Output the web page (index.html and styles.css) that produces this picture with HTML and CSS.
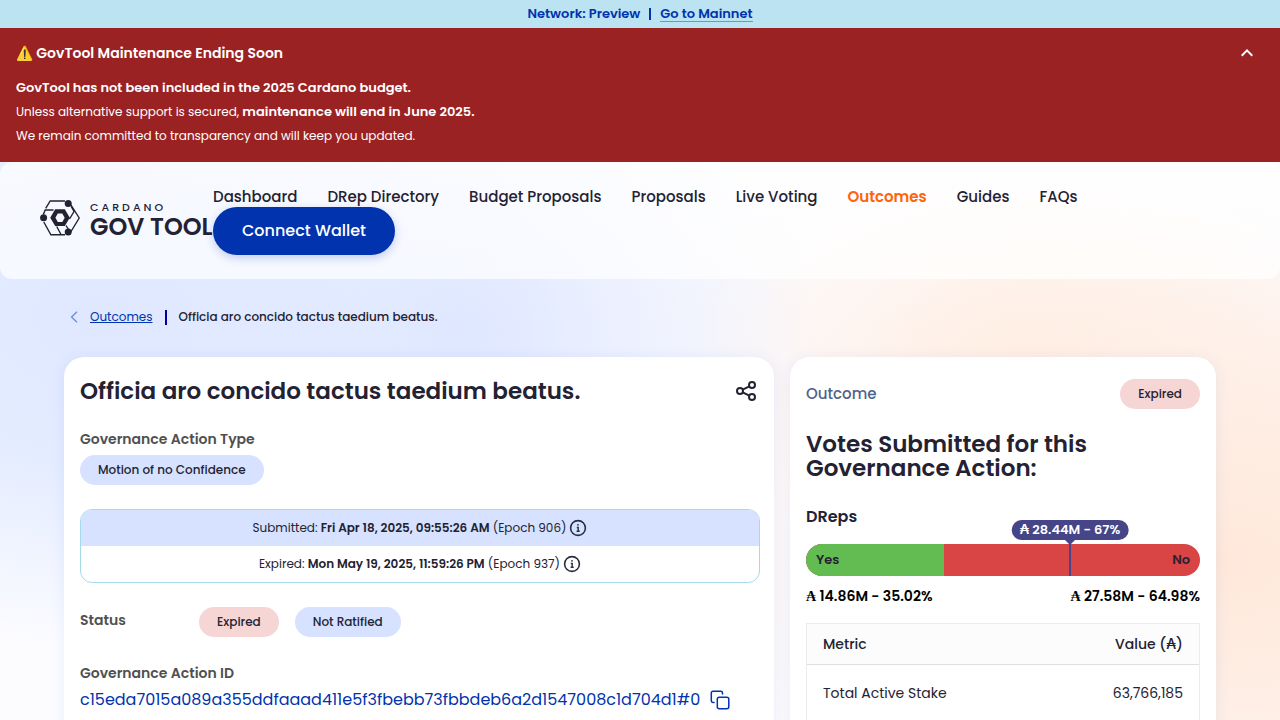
FILE: index.html
```html
<!DOCTYPE html>
<html lang="en">
<head>
<meta charset="utf-8">
<meta name="viewport" content="width=device-width, initial-scale=1">
<title>Outcomes - Cardano GovTool</title>
<link rel="stylesheet" href="styles.css">
</head>
<body>
<div class="network-bar">
  <span class="network-name">Network: Preview</span>
  <span class="network-divider"></span>
  <a class="network-link" href="#mainnet">Go to Mainnet</a>
</div>

<section class="notice">
  <div class="notice-head">
    <h2 class="notice-title"><span class="notice-emoji">⚠️</span> GovTool Maintenance Ending Soon</h2>
    <button class="icon-button" type="button" aria-label="Collapse notice">
      <svg width="24" height="24" viewBox="0 0 24 24" fill="#fff"><path d="m12 8-6 6 1.410 1.410L12 10.830l4.590 4.580L18 14z"/></svg>
    </button>
  </div>
  <p class="notice-text"><strong>GovTool has not been included in the 2025 Cardano budget.</strong></p>
  <p class="notice-text">Unless alternative support is secured, <strong>maintenance will end in June 2025.</strong></p>
  <p class="notice-text">We remain committed to transparency and will keep you updated.</p>
</section>

<header class="header">
  <a class="logo" href="#home">
    <svg class="logo-mark" width="40" height="36" viewBox="0 0 40 36" fill="none" stroke="#242232" stroke-width="1.400">
      <path d="M5.700 8.300 10.200 1H25M3.300 14.500 5.200 10H13.500M30.700 4.500 39.200 18 30.700 32M25 34.800H10.900L3.800 22M31.200 6.500 34 11.500 29.500 19M16.700 26.500 21 34.500M26 25.500 28.500 29.500"/>
      <path d="M15.200 9.300h9.600l5 8.400-5 8.400h-9.600l-5-8.400z" fill="#242232" stroke="none"/>
      <path d="M17.800 13.500h4.500l2.400 4.200-2.400 4.200h-4.500l-2.400-4.200z" fill="#f5f8ff" stroke="none"/>
      <g fill="#242232" stroke="none"><circle cx="28.200" cy="3.600" r="3.500"/><circle cx="3.600" cy="17.700" r="3.500"/><circle cx="28.200" cy="32" r="3.500"/></g>
    </svg>
    <span class="logo-text"><span class="logo-small">CARDANO</span><span class="logo-big">GOV TOOL</span></span>
  </a>
  <div class="header-main">
    <nav class="nav">
      <a href="#dashboard">Dashboard</a>
      <a href="#dreps">DRep Directory</a>
      <a href="#budget">Budget Proposals</a>
      <a href="#proposals">Proposals</a>
      <a href="#voting">Live Voting</a>
      <a class="active" href="#outcomes">Outcomes</a>
      <a href="#guides">Guides</a>
      <a href="#faqs">FAQs</a>
    </nav>
    <button class="connect" type="button">Connect Wallet</button>
  </div>
</header>

<main class="page">
  <div class="crumbs">
    <svg width="8" height="12" viewBox="0 0 8 12" fill="none" stroke="#6a8ed6" stroke-width="1.300"><path d="M7 .7 1.500 6 7 11.300"/></svg>
    <a class="crumb-link" href="#outcomes">Outcomes</a>
    <span class="crumb-divider"></span>
    <span class="crumb-current">Officia aro concido tactus taedium beatus.</span>
  </div>

  <div class="columns">
    <article class="card">
      <div class="title-row">
        <h1 class="heading">Officia aro concido tactus taedium beatus.</h1>
        <button class="icon-button" type="button" aria-label="Share">
          <svg width="24" height="24" viewBox="0 0 24 24" fill="none" stroke="#242232" stroke-width="2"><circle cx="18" cy="6" r="3"/><circle cx="6" cy="12" r="3"/><circle cx="18" cy="18" r="3"/><path d="m8.700 10.700 6.600-3.400M8.700 13.300l6.600 3.400"/></svg>
        </button>
      </div>

      <section class="field field-type">
        <h3 class="label">Governance Action Type</h3>
        <span class="chip">Motion of no Confidence</span>
      </section>

      <div class="dates">
        <div class="date date-submitted">
          <span>Submitted: <strong>Fri Apr 18, 2025, 09:55:26 AM</strong> (Epoch 906)</span>
          <svg width="18" height="18" viewBox="0 0 18 18" fill="none" stroke="#2a2e42" stroke-width="1.600"><circle cx="9" cy="9" r="7.400"/><path d="M7.800 8.500H9.200V12.200M7.600 12.300H10.700" stroke-width="1.400"/><circle cx="9" cy="5.800" r=".9" fill="#2a2e42" stroke="none"/></svg>
        </div>
        <div class="date">
          <span>Expired: <strong>Mon May 19, 2025, 11:59:26 PM</strong> (Epoch 937)</span>
          <svg width="18" height="18" viewBox="0 0 18 18" fill="none" stroke="#2a2e42" stroke-width="1.600"><circle cx="9" cy="9" r="7.400"/><path d="M7.800 8.500H9.200V12.200M7.600 12.300H10.700" stroke-width="1.400"/><circle cx="9" cy="5.800" r=".9" fill="#2a2e42" stroke="none"/></svg>
        </div>
      </div>

      <section class="status">
        <h3 class="label">Status</h3>
        <div class="chips"><span class="chip chip-expired">Expired</span><span class="chip">Not Ratified</span></div>
      </section>

      <section class="field">
        <h3 class="label">Governance Action ID</h3>
        <div class="id-row">
          <span class="id">c15eda7015a089a355ddfaaad411e5f3fbebb73fbbdeb6a2d1547008c1d704d1#0</span>
          <button class="icon-button" type="button" aria-label="Copy ID">
            <svg width="20" height="20" viewBox="0 0 20 20" fill="none" stroke="#0033ad" stroke-width="1.500" stroke-linecap="round"><rect x="7.300" y="7.300" width="11.500" height="11.500" rx="2"/><path d="M4 12.500H3A1.700 1.700 0 0 1 1.300 10.800V3A1.700 1.700 0 0 1 3 1.300h7.800A1.700 1.700 0 0 1 12.500 3v1"/></svg>
          </button>
        </div>
      </section>
    </article>

    <aside class="card">
      <div class="outcome-row">
        <span class="outcome">Outcome</span>
        <span class="chip chip-expired">Expired</span>
      </div>
      <h2 class="heading votes-heading">Votes Submitted for this Governance Action:</h2>

      <h3 class="group">DReps</h3>
      <div class="bar">
        <div class="bar-fill">
          <div class="bar-yes" style="width:35.02%">Yes</div>
          <div class="bar-no">No</div>
        </div>
        <div class="threshold" style="left:67%"><span class="bubble">₳ 28.44M - 67%</span></div>
      </div>
      <div class="totals"><span><span class="ada">₳</span> 14.86M - 35.02%</span><span><span class="ada">₳</span> 27.58M - 64.98%</span></div>

      <table class="metrics">
        <thead><tr><th>Metric</th><th>Value (₳)</th></tr></thead>
        <tbody><tr><td>Total Active Stake</td><td>63,766,185</td></tr></tbody>
      </table>
    </aside>
  </div>
</main>
</body>
</html>
```
FILE: styles.css
```css
* { box-sizing: border-box; }

body {
  margin: 0;
  min-height: 100vh;
  font-family: Poppins, Inter, "Open Sans", sans-serif;
  font-size: 12px;
  line-height: 24px;
  color: #242232;
  background:
    radial-gradient(ellipse 36% 46% at 8% 44%, #dfe8ff 0%, rgba(222, 232, 255, 0.800) 45%, rgba(225, 233, 255, 0) 100%),
    radial-gradient(ellipse 28% 40% at 36% 46%, #dfe7ff 0%, rgba(230, 236, 255, 0) 100%),
    radial-gradient(ellipse 42% 50% at 96% 78%, #ffe8da 0%, rgba(255, 235, 223, 0.800) 40%, rgba(255, 240, 232, 0) 100%),
    radial-gradient(ellipse 30% 30% at 80% 48%, #fff0e6 0%, rgba(255, 242, 234, 0) 100%),
    #fcfcff;
  background-attachment: fixed;
}

h1, h2, h3, p { margin: 0; }
a { color: inherit; text-decoration: none; }
button { font: inherit; border: 0; cursor: pointer; }
strong { font-weight: 600; }
svg { display: block; flex: none; }
.icon-button { display: block; padding: 0; background: none; }

.network-bar {
  display: flex;
  justify-content: center;
  align-items: center;
  gap: 9px;
  height: 28px;
  background: #bbe3f1;
  color: #0033ad;
  font-size: 13px;
  font-weight: 600;
}
.network-divider { width: 2px; height: 12px; background: #0033ad; }
.network-link { border-bottom: 1px solid #6f94d3; line-height: 14px; }

.notice { padding: 13px 16px 14px; background: #9b2223; color: #fff; }
.notice-head {
  display: flex;
  justify-content: space-between;
  align-items: center;
  padding-right: 5px;
  margin-bottom: 11px;
}
.notice-title { font-size: 14px; font-weight: 600; line-height: 24px; }
.notice-text { line-height: 24px; }
.notice-text strong { font-size: 13px; }

.header {
  display: flex;
  align-items: center;
  padding: 24px 40px;
  border-radius: 12px;
  background: rgba(255, 255, 255, 0.700);
}
.logo { display: flex; align-items: flex-start; gap: 10px; flex: none; width: 173px; padding-bottom: 2px; }
.logo-text { display: flex; flex-direction: column; white-space: nowrap; }
.logo-small { font-size: 11px; font-weight: 500; line-height: 14px; letter-spacing: 3px; }
.logo-big { font-size: 24px; font-weight: 600; line-height: 26px; }
.header-main { flex: 1; }
.nav { display: flex; flex-wrap: wrap; gap: 0 30px; font-size: 15px; font-weight: 500; line-height: 21px; }
.nav .active { color: #ff640a; font-weight: 600; }
.connect {
  display: block;
  padding: 12px 29px;
  border-radius: 24px;
  background: #0033ad;
  color: #fff;
  font-size: 16px;
  font-weight: 500;
  line-height: 24px;
  box-shadow: 0 3px 10px rgba(0, 51, 173, 0.220);
}

.page { padding: 26px 64px 40px; }
.crumbs { display: flex; align-items: center; gap: 12px; padding-left: 6px; margin-bottom: 28px; }
.crumb-link { color: #0033ad; text-decoration: underline; }
.crumb-divider { width: 2px; height: 15px; background: #0000a0; }
.crumb-current { font-weight: 500; }

.columns { display: grid; grid-template-columns: 5fr 3fr; gap: 16px; }
.card {
  min-width: 0;
  padding: 22px 16px 64px;
  border-radius: 20px;
  background: #fff;
  box-shadow: 0 2px 15px rgba(47, 98, 220, 0.090);
}
.card:first-child { padding-right: 14px; }
.heading { font-size: 23px; font-weight: 600; line-height: 24px; }

.title-row { display: flex; justify-content: space-between; align-items: center; margin-bottom: 24px; padding-right: 2px; }
.field-type { margin-bottom: 24px; }
.label { font-size: 14px; font-weight: 600; line-height: 24px; color: #505050; }
.field-type .label { margin-bottom: 4px; }

.chip {
  display: inline-block;
  padding: 5px 18px;
  border-radius: 15px;
  background: #d6e2ff;
  font-size: 12px;
  font-weight: 500;
  line-height: 20px;
  vertical-align: top;
}
.chip-expired { background: #f6d5d5; }

.dates { margin-bottom: 24px; border: 1px solid #a5dbe8; border-radius: 12px; overflow: hidden; }
.date { display: flex; justify-content: center; align-items: center; gap: 3px; height: 36px; }
.date-submitted { background: #d6e2ff; }
.status { display: flex; align-items: flex-start; margin-bottom: 24px; }
.status .label { width: 119px; }
.chips { display: flex; gap: 16px; }
.status .label { line-height: 26px; }
.id-row { display: flex; align-items: center; gap: 10px; padding-top: 3px; }
.id { min-width: 0; overflow-wrap: anywhere; color: #0033ad; font-size: 16px; }

.outcome-row { display: flex; justify-content: space-between; align-items: center; margin-bottom: 23px; }
.outcome { font-size: 15px; font-weight: 500; color: #506288; }
.votes-heading { margin-bottom: 25px; }
.group { font-size: 16px; font-weight: 600; line-height: 24px; margin-bottom: 15px; }
.bar { position: relative; }
.bar-fill { display: flex; height: 32px; border-radius: 16px; overflow: hidden; background: #d94444; font-size: 13px; font-weight: 600; line-height: 32px; }
.bar-yes { padding-left: 10px; background: #63bc51; }
.bar-no { flex: 1; padding-right: 10px; text-align: right; }
.threshold { position: absolute; top: 0; bottom: 0; width: 2px; margin-left: -1px; background: #454587; }
.threshold::before {
  content: "";
  position: absolute;
  top: -4px;
  left: -4px;
  border: 5px solid transparent;
  border-top-color: #454587;
  border-bottom: 0;
}
.bubble {
  position: absolute;
  bottom: 36px;
  left: 50%;
  transform: translateX(-50%);
  padding: 0 8px;
  border-radius: 10px;
  background: #454587;
  color: #fff;
  font-size: 13px;
  font-weight: 600;
  line-height: 20px;
  white-space: nowrap;
}
.totals { display: flex; justify-content: space-between; margin: 8px 0 15px; color: #000; font-size: 14px; font-weight: 600; }
.ada { font-family: "Liberation Serif", "DejaVu Serif", serif; line-height: 1; }

.metrics { width: 100%; border: 1px solid #ececec; border-collapse: separate; border-spacing: 0; font-size: 14px; }
.metrics th { padding: 8px 16px; background: #fcfcfc; border-bottom: 1px solid #e0e0e0; font-weight: 500; text-align: left; }
.metrics td { padding: 16px; }
.metrics th:last-child, .metrics td:last-child { text-align: right; }
```
